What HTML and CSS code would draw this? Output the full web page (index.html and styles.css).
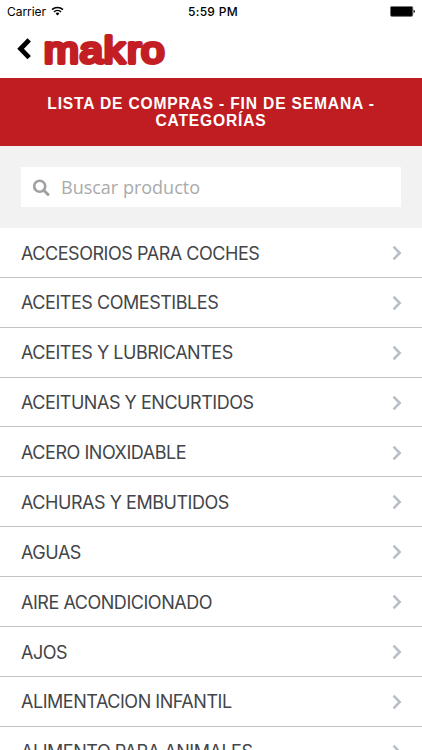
FILE: index.html
```
<!DOCTYPE html>
<html lang="es">
<head>
	<meta charset="UTF-8">
	<title>Lista de compras</title>
	<link rel="stylesheet" href="styles.css">
</head>
<body>
	<div class="status">
		<div class="carrier">
			<span>Carrier</span>
			<svg class="wifi" width="13" height="10" viewBox="0 0 13 10">
				<path d="M1 3.6a8 8 0 0 1 11 0M3 5.9a5 5 0 0 1 7 0" fill="none" stroke="#000" stroke-width="1.5"/>
				<path d="M4.6 7.4a2.8 2.8 0 0 1 3.8 0L6.5 9.5z"/>
			</svg>
		</div>
		<div class="time">5:59 PM</div>
		<div class="battery">
			<svg width="26" height="11" viewBox="0 0 26 11">
				<rect x=".4" y=".4" width="22.4" height="10" rx="1.4" stroke="#777" stroke-width=".8"/>
				<path d="M23.6 3.8q1.3.4 1.3 1.6t-1.3 1.6z"/>
			</svg>
		</div>
	</div>

	<div class="navbar">
		<svg class="back" width="14" height="22" viewBox="0 0 14 22">
			<path d="M12.2 1.9L3.6 10.8l8.6 8.9" fill="none" stroke="#000" stroke-width="4.8"/>
		</svg>
		<svg class="logo" width="126" height="50" viewBox="0 0 126 50">
			<text transform="scale(1.14 1)" x="0.9 32.3 53.6 74 86.2" y="35.2">makro</text>
		</svg>
	</div>

	<h1 class="title">LISTA DE COMPRAS - FIN DE SEMANA -<br>CATEGORÍAS</h1>

	<div class="search">
		<div class="search-box">
			<svg width="17" height="17" viewBox="0 0 17 17">
				<circle cx="6.7" cy="7.2" r="5.5" fill="none" stroke="#a0a0a0" stroke-width="2.6"/>
				<path d="M11 11.5l4 4" stroke="#a0a0a0" stroke-width="3" stroke-linecap="round"/>
			</svg>
			<input type="text" class="search-input" placeholder="Buscar producto">
		</div>
	</div>

	<ul class="list">
		<li><span>ACCESORIOS PARA COCHES</span><svg class="arrow" viewBox="0 0 10 16"><path d="M1.5 1.7L7.7 8l-6.2 6.3"/></svg></li>
		<li><span>ACEITES COMESTIBLES</span><svg class="arrow" viewBox="0 0 10 16"><path d="M1.5 1.7L7.7 8l-6.2 6.3"/></svg></li>
		<li><span>ACEITES Y LUBRICANTES</span><svg class="arrow" viewBox="0 0 10 16"><path d="M1.5 1.7L7.7 8l-6.2 6.3"/></svg></li>
		<li><span>ACEITUNAS Y ENCURTIDOS</span><svg class="arrow" viewBox="0 0 10 16"><path d="M1.5 1.7L7.7 8l-6.2 6.3"/></svg></li>
		<li><span>ACERO INOXIDABLE</span><svg class="arrow" viewBox="0 0 10 16"><path d="M1.5 1.7L7.7 8l-6.2 6.3"/></svg></li>
		<li><span>ACHURAS Y EMBUTIDOS</span><svg class="arrow" viewBox="0 0 10 16"><path d="M1.5 1.7L7.7 8l-6.2 6.3"/></svg></li>
		<li><span>AGUAS</span><svg class="arrow" viewBox="0 0 10 16"><path d="M1.5 1.7L7.7 8l-6.2 6.3"/></svg></li>
		<li><span>AIRE ACONDICIONADO</span><svg class="arrow" viewBox="0 0 10 16"><path d="M1.5 1.7L7.7 8l-6.2 6.3"/></svg></li>
		<li><span>AJOS</span><svg class="arrow" viewBox="0 0 10 16"><path d="M1.5 1.7L7.7 8l-6.2 6.3"/></svg></li>
		<li><span>ALIMENTACION INFANTIL</span><svg class="arrow" viewBox="0 0 10 16"><path d="M1.5 1.7L7.7 8l-6.2 6.3"/></svg></li>
		<li><span>ALIMENTO PARA ANIMALES</span><svg class="arrow" viewBox="0 0 10 16"><path d="M1.5 1.7L7.7 8l-6.2 6.3"/></svg></li>
	</ul>
</body>
</html>
```
FILE: styles.css
```
* {
	box-sizing: border-box;
}
body {
	margin: 0;
	height: 750px;
	overflow: hidden;
	background: #fff;
	font-family: Inter, "Liberation Sans", sans-serif;
	color: #434549;
}

/* status bar */
.status {
	display: grid;
	grid-template-columns: 1fr auto 1fr;
	align-items: center;
	height: 22px;
	padding: 0 6px 0 7px;
	font-size: 12px;
	color: #000;
}
.carrier {
	display: flex;
	align-items: center;
	gap: 5px;
	letter-spacing: -.05px;
}
.time {
	padding-left: 3px;
	font-weight: 500;
	letter-spacing: .3px;
}
.battery {
	display: flex;
	justify-content: flex-end;
}

.navbar {
	display: flex;
	align-items: flex-start;
	height: 56px;
	padding: 6px 0 0 17px;
}
.back {
	margin-top: 10px;
}
.logo {
	margin-left: 12px;
}
.logo text {
	font: 36.5px "Liberation Sans", sans-serif;
	fill: #c21e24;
	stroke: #c21e24;
	stroke-width: 4px;
	stroke-linejoin: round;
}

.title {
	height: 68px;
	margin: 0;
	padding: 18px 0 0;
	background: #c01d22;
	color: #fff;
	font: bold 15.6px/16.5px "Liberation Sans", Arial, sans-serif;
	letter-spacing: .83px;
	text-align: center;
}

.search {
	height: 82px;
	padding: 21px;
	background: #f2f2f2;
}
.search-box {
	display: flex;
	align-items: center;
	height: 40px;
	padding-left: 12px;
	background: #fff;
}
.search-input {
	flex: 1;
	margin-left: 11px;
	padding: 0;
	border: 0;
	outline: 0;
	background: none;
	font: 18px "Open Sans", sans-serif;
}
.search-input::placeholder {
	color: #aaa;
}

.list {
	margin: 0;
	padding: 0;
	list-style: none;
}
.list li {
	display: flex;
	align-items: center;
	justify-content: space-between;
	height: 49.87px;
	padding: 1.4px 20px 0 21px;
	border-bottom: 1px solid #c4c4c4;
	font-size: 18px;
	letter-spacing: -.46px;
	white-space: nowrap;
}
.arrow {
	width: 10px;
	height: 16px;
	fill: none;
	stroke: #b9bfc7;
	stroke-width: 2.6;
}
```
